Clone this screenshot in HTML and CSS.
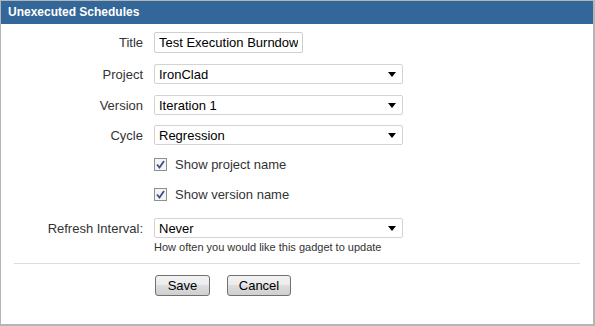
FILE: index.html
```html
<!DOCTYPE html>
<html lang="en">
  <head>
    <meta charset="UTF-8" />
    <title>Unexecuted Schedules</title>
    <link rel="stylesheet" href="styles.css">
  </head>
  <body>
    <div class="gadget">
      <div class="gadget-header">Unexecuted Schedules</div>
      <form class="gadget-form">
        <div class="row row-title">
          <label for="title">Title</label>
          <input type="text" id="title" value="Test Execution Burndown" />
        </div>

        <div class="row row-project">
          <label for="project">Project</label>
          <span class="select-wrap">
            <select id="project"><option>IronClad</option></select>
          </span>
        </div>

        <div class="row row-version">
          <label for="version">Version</label>
          <span class="select-wrap">
            <select id="version"><option>Iteration 1</option></select>
          </span>
        </div>

        <div class="row row-cycle">
          <label for="cycle">Cycle</label>
          <span class="select-wrap">
            <select id="cycle"><option>Regression</option></select>
          </span>
        </div>

        <div class="row row-check1">
          <span class="label-space"></span>
          <span class="check">
            <svg width="13" height="13" viewBox="0 0 13 13">
              <rect x="0.5" y="0.5" width="12" height="12" fill="#f4f4f4" stroke="#8e8f8f" />
              <path d="M3 6.5 L5.5 9.5 L10 3" fill="none" stroke="#3b4f8f" stroke-width="1.8" />
            </svg>
            Show project name
          </span>
        </div>

        <div class="row row-check2">
          <span class="label-space"></span>
          <span class="check">
            <svg width="13" height="13" viewBox="0 0 13 13">
              <rect x="0.5" y="0.5" width="12" height="12" fill="#f4f4f4" stroke="#8e8f8f" />
              <path d="M3 6.5 L5.5 9.5 L10 3" fill="none" stroke="#3b4f8f" stroke-width="1.8" />
            </svg>
            Show version name
          </span>
        </div>

        <div class="row row-refresh">
          <label for="refresh">Refresh Interval:</label>
          <span class="select-wrap">
            <select id="refresh"><option>Never</option></select>
          </span>
        </div>
        <div class="help">How often you would like this gadget to update</div>

        <hr class="divider" />

        <div class="buttons">
          <button type="submit" class="btn btn-save">Save</button>
          <button type="button" class="btn btn-cancel">Cancel</button>
        </div>
      </form>
    </div>
  </body>
</html>
```

FILE: styles.css
```css
body {
  margin: 0;
  font-family: "Liberation Sans", Arial, sans-serif;
  background-color: #fff;
}
.gadget {
  width: 595px;
  height: 326px;
  box-sizing: border-box;
  border: 1px solid #b5b5b5;
  border-right-width: 2px;
  border-bottom-width: 2px;
}
.gadget-header {
  height: 23px;
  line-height: 23px;
  padding-left: 7px;
  background-color: #336699;
  color: #fff;
  font-size: 12px;
  font-weight: bold;
}
.gadget-form {
  padding-top: 8px;
}
.row {
  display: flex;
  align-items: center;
}
.row label,
.label-space {
  width: 142px;
  margin-right: 11px;
  text-align: right;
  font-size: 13px;
  color: #333;
}
.row input[type="text"] {
  width: 149px;
  height: 21px;
  box-sizing: border-box;
  padding: 0 4px;
  border: 1px solid #cfcfcf;
  border-radius: 2px;
  font-family: inherit;
  font-size: 13px;
  color: #000;
}
.select-wrap {
  position: relative;
  display: block;
}
.select-wrap select {
  appearance: none;
  -webkit-appearance: none;
  width: 249px;
  height: 20px;
  box-sizing: border-box;
  padding: 0 4px;
  border: 1px solid #d3d3d3;
  border-radius: 2px;
  background-color: #fff;
  font-family: inherit;
  font-size: 13px;
  color: #000;
}
.select-wrap::after {
  content: "";
  position: absolute;
  right: 7px;
  top: 8px;
  width: 0;
  height: 0;
  border-left: 4px solid transparent;
  border-right: 4px solid transparent;
  border-top: 5px solid #000;
  pointer-events: none;
}
.row-title {
  height: 21px;
}
.row-project {
  margin-top: 11px;
}
.row-version {
  margin-top: 11px;
}
.row-cycle {
  margin-top: 10px;
}
.row-check1 {
  margin-top: 9px;
  height: 20px;
}
.row-check2 {
  margin-top: 10px;
  height: 20px;
}
.row-refresh {
  margin-top: 14px;
}
.check {
  display: flex;
  align-items: center;
  gap: 8px;
  font-size: 13px;
  color: #333;
}
.check svg {
  display: block;
}
.help {
  margin: 3px 0 0 153px;
  font-size: 11px;
  line-height: 13px;
  color: #333;
}
.divider {
  margin: 9px 13px 0 13px;
  border: 0;
  border-top: 1px solid #ddd;
}
.buttons {
  display: flex;
  gap: 17px;
  margin: 11px 0 0 154px;
}
.btn {
  height: 21px;
  padding: 0;
  border: 1px solid #707070;
  border-radius: 3px;
  background: linear-gradient(#f2f2f2, #ebebeb 50%, #dddddd 50%, #cfcfcf);
  font-family: inherit;
  font-size: 13px;
  color: #000;
}
.btn-save {
  width: 55px;
}
.btn-cancel {
  width: 64px;
}
```
